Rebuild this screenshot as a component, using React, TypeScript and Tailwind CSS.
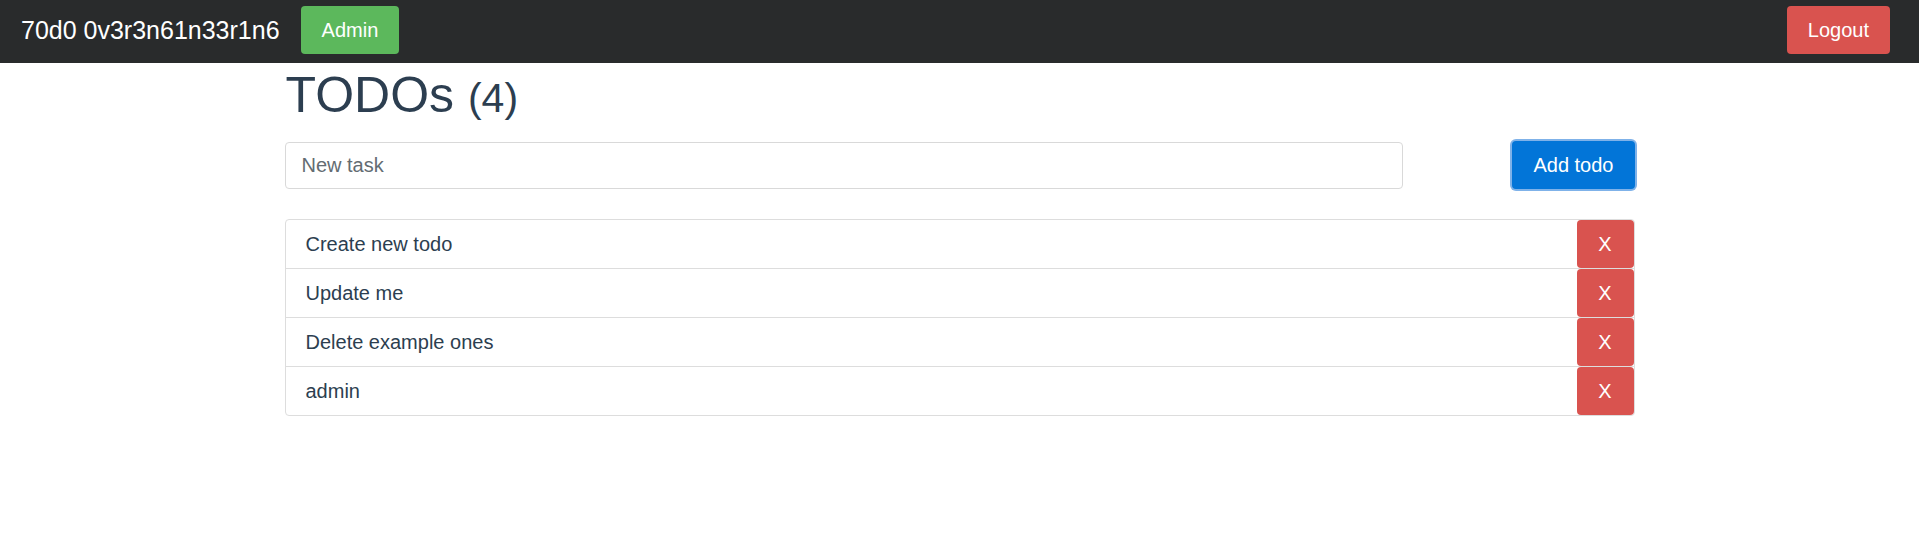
import * as React from "react"

const todos = ["Create new todo", "Update me", "Delete example ones", "admin"]

const App: React.FC = () => {
	return (
		<div className="min-h-[560px] bg-white font-['Liberation_Sans',Arial,sans-serif]">
			<nav className="h-[63px] bg-[#292b2c] flex items-start justify-between pl-[21px] pr-[29px] pt-[6px]">
				<div className="flex items-center">
					<span className="text-white text-[25px] leading-[48px]">70d0 0v3r3n61n33r1n6</span>
					<button className="ml-[21px] h-[48px] px-[21px] rounded-[4px] bg-[#5cb85c] text-white text-[20px]">
						Admin
					</button>
				</div>
				<button className="h-[48px] px-[21px] rounded-[4px] bg-[#d9534f] text-white text-[20px]">
					Logout
				</button>
			</nav>
			<div className="w-[1350px] mx-auto">
				<h1 className="mt-[5px] text-[50px] leading-[1.1] text-[#2c3e50] pl-[1px]">
					TODOs <small className="text-[41px]">(4)</small>
				</h1>
				<div className="mt-[18px] flex items-center justify-between">
					<input
						placeholder="New task"
						className="w-[1118px] h-[47px] border border-[#d9d9d9] rounded-[4px] px-[16px] text-[20px] text-[#464a4c] placeholder:text-[#636c72] outline-none"
					/>
					<button className="h-[48px] px-[21px] rounded-[4px] bg-[#0275d8] text-white text-[20px] ring-2 ring-[#7fb2e9]">
						Add todo
					</button>
				</div>
				<ul className="mt-[30px] border border-[#dddddd] rounded-[4px]">
					{todos.map((t, i) => (
						<li
							key={t}
							className={
								"flex items-stretch " +
								(i < todos.length - 1 ? "h-[49px] border-b border-[#dddddd]" : "h-[48px]")
							}
						>
							<span className="flex-1 flex items-center pl-[20px] text-[20px] text-[#2c3e50]">{t}</span>
							<button className="w-[57px] rounded-[4px] bg-[#d9534f] text-white text-[20px]">X</button>
						</li>
					))}
				</ul>
			</div>
		</div>
	)
}

export default App
